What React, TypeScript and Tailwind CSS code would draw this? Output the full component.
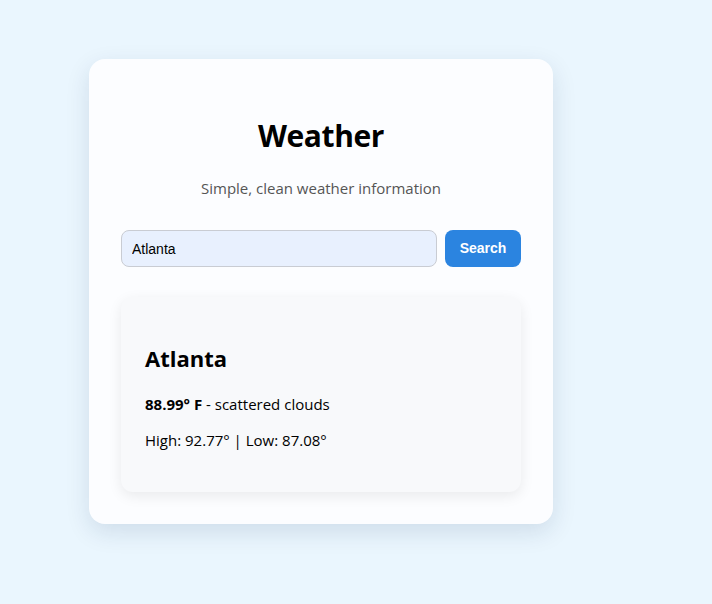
import { useState } from "react";

const weather = {
  city: "Atlanta",
  temp: "88.99",
  desc: "scattered clouds",
  high: "92.77",
  low: "87.08",
};

export default function App() {
  const [query, setQuery] = useState("Atlanta");

  return (
    <div className="min-h-[604px] w-full bg-[#eaf6fe] pt-[59px] pl-[89px] font-['Open_Sans',sans-serif]">
      <div className="w-[464px] rounded-2xl bg-[#fcfdff] p-8 shadow-[0_8px_24px_rgba(0,40,80,0.12)]">
        <h1 className="mt-[23px] text-center text-[30px] font-bold leading-[43px] tracking-[-0.4px] text-black">
          Weather
        </h1>
        <p className="mt-[21px] text-center text-[15px] leading-[21px] text-[#555]">
          Simple, clean weather information
        </p>

        {/* search */}
        <div className="mt-[31px] flex gap-2">
          <input
            value={query}
            onChange={(e) => setQuery(e.target.value)}
            className="h-[37px] w-[316px] rounded-lg border border-[#c9ccd3] bg-[#e8f0fe] px-[10px] font-['Liberation_Sans',sans-serif] text-[14px] text-black outline-none"
          />
          <button
            type="button"
            className="h-[37px] w-[76px] rounded-lg bg-[#2b84e0] font-['Liberation_Sans',sans-serif] text-[14px] font-bold text-white"
          >
            Search
          </button>
        </div>

        {/* result */}
        <div className="mt-[30px] rounded-xl bg-[#f8f9fb] p-6 shadow-[0_4px_14px_rgba(0,0,0,0.08)]">
          <h2 className="mt-[21px] text-[22px] font-bold leading-[32px] text-black">{weather.city}</h2>
          <p className="mt-[20px] text-[15px] leading-[21px] text-black">
            <span className="font-bold">{weather.temp}° F</span> - {weather.desc}
          </p>
          <p className="mt-[15px] mb-[17px] text-[15px] leading-[21px] text-black">
            High: {weather.high}° | Low: {weather.low}°
          </p>
        </div>
      </div>
    </div>
  );
}
